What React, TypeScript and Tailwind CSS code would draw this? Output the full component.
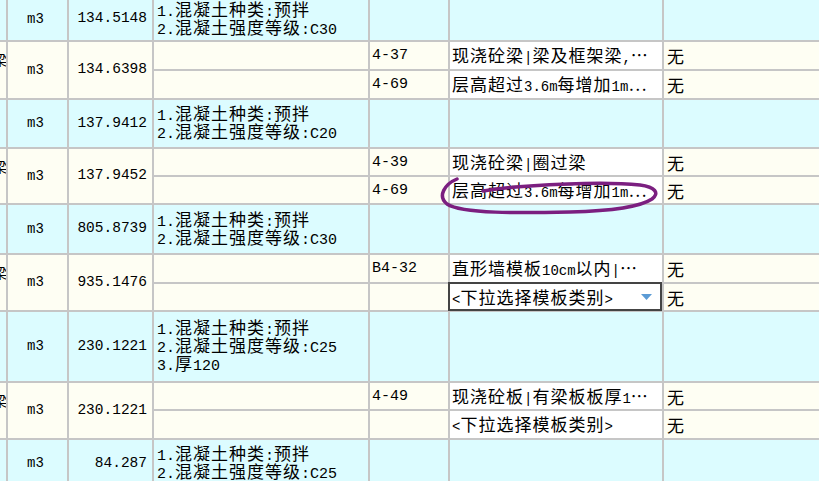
import React from "react";

const CJK = "font-['Noto_Sans_CJK_SC',sans-serif] text-[17px] tracking-[1px]";
const MONO = "font-['Liberation_Mono',monospace] text-[15px]";
const MONO_S = "font-['Liberation_Mono',monospace] text-[14px]";

function T({ s, small }: { s: string; small?: boolean }) {
  const runs: { a: boolean; t: string }[] = [];
  for (const ch of s) {
    const a = ch.charCodeAt(0) < 128;
    const last = runs[runs.length - 1];
    if (last && last.a === a) last.t += ch;
    else runs.push({ a, t: ch });
  }
  return (
    <span className="whitespace-pre">
      {runs.map((r, i) => (
        <span key={i} className={r.a ? (small ? MONO_S : MONO) : CJK}>
          {r.t}
        </span>
      ))}
    </span>
  );
}

const COLS = "grid grid-cols-[6px_59px_83px_214px_78px_212px_1fr] gap-[2px]";
const BLUE = "bg-[#dcfcff]";
const CREAM = "bg-[#fefef3]";

function Desc({ lines }: { lines: string[] }) {
  return (
    <div className="flex flex-col justify-center pl-[3px] pt-[1px] leading-[18px] text-black overflow-hidden">
      {lines.map((l, i) => (
        <div key={i} className="h-[18px] flex items-center">
          <T s={l} />
        </div>
      ))}
    </div>
  );
}

function BlueRow({ h, qty, lines }: { h: string; qty: string; lines: string[] }) {
  return (
    <div className={`${COLS} ${h}`}>
      <div className={BLUE} />
      <div className={`${BLUE} flex items-center justify-center pr-[4px] ${MONO_S} text-black`}>m3</div>
      <div className={`${BLUE} flex items-center justify-end pr-[5px] text-[14.5px] font-['Liberation_Mono',monospace] text-black`}>
        {qty}
      </div>
      <div className={`${BLUE} flex`}>
        <Desc lines={lines} />
      </div>
      <div className={BLUE} />
      <div className={BLUE} />
      <div className={BLUE} />
    </div>
  );
}

type Sub = { code: string; name: string; drop?: boolean; box?: boolean };

function CreamRow({ rows, qty, subs }: { rows: string; qty: string; subs: Sub[] }) {
  return (
    <div className={`${COLS} ${rows}`}>
      <div className={`${CREAM} row-span-2 overflow-hidden flex justify-end items-start pt-[8px]`}>
        <span className={`font-['Noto_Sans_CJK_SC',sans-serif] text-[14px] whitespace-nowrap text-black leading-[18px] -mr-[1px]`}>梁</span>
      </div>
      <div className={`${CREAM} row-span-2 flex items-center justify-center pr-[4px] ${MONO_S} text-black`}>m3</div>
      <div className={`${CREAM} row-span-2 flex items-center justify-end pr-[5px] text-[14.5px] font-['Liberation_Mono',monospace] text-black`}>
        {qty}
      </div>
      {subs.map((s, i) => (
        <React.Fragment key={i}>
          <div className={CREAM} />
          <div className={`${CREAM} flex items-center pl-[2px] pt-[2px] ${MONO} text-black`}>{s.code}</div>
          <div className="relative bg-white flex items-center pl-[2px] pt-[2px] text-black leading-[18px] whitespace-nowrap">
            <T s={s.name} small />
            {s.drop && (
              <svg className="ml-auto mr-[10px] mt-[-2px]" width="11" height="6" viewBox="0 0 11 6">
                <polygon points="0,0 11,0 5.5,6" fill="#5b9bd5" />
              </svg>
            )}
            {s.box && (
              <div className="absolute -left-[2px] -top-[2px] right-0 -bottom-[1px] border-2 border-[#444] z-10" />
            )}
          </div>
          <div className={`${CREAM} flex items-center pl-[3px] pt-[2px] text-black leading-[18px]`}>
            <T s="无" />
          </div>
        </React.Fragment>
      ))}
    </div>
  );
}

export default function App() {
  return (
    <div className="relative w-[819px] h-[481px] overflow-hidden bg-[#c6c6c6]">
      <div className="flex flex-col gap-[2px] -mt-[2px]">
        <BlueRow h="h-[42px]" qty="134.5148" lines={["1.混凝土种类:预拌", "2.混凝土强度等级:C30"]} />
        <CreamRow
          rows="grid-rows-[27px_27px]"
          qty="134.6398"
          subs={[
            { code: "4-37", name: "现浇砼梁|梁及框架梁,⋯" },
            { code: "4-69", name: "层高超过3.6m每增加1m⋯" },
          ]}
        />
        <BlueRow h="h-[47px]" qty="137.9412" lines={["1.混凝土种类:预拌", "2.混凝土强度等级:C20"]} />
        <CreamRow
          rows="grid-rows-[26px_26px]"
          qty="137.9452"
          subs={[
            { code: "4-39", name: "现浇砼梁|圈过梁" },
            { code: "4-69", name: "层高超过3.6m每增加1m⋯" },
          ]}
        />
        <BlueRow h="h-[48px]" qty="805.8739" lines={["1.混凝土种类:预拌", "2.混凝土强度等级:C30"]} />
        <CreamRow
          rows="grid-rows-[27px_26px]"
          qty="935.1476"
          subs={[
            { code: "B4-32", name: "直形墙模板10cm以内|⋯" },
            { code: "", name: "<下拉选择模板类别>", drop: true, box: true },
          ]}
        />
        <BlueRow
          h="h-[69px]"
          qty="230.1221"
          lines={["1.混凝土种类:预拌", "2.混凝土强度等级:C25", "3.厚120"]}
        />
        <CreamRow
          rows="grid-rows-[26px_27px]"
          qty="230.1221"
          subs={[
            { code: "4-49", name: "现浇砼板|有梁板板厚1⋯" },
            { code: "", name: "<下拉选择模板类别>" },
          ]}
        />
        <BlueRow h="h-[47px]" qty="84.287" lines={["1.混凝土种类:预拌", "2.混凝土强度等级:C25"]} />
      </div>
      <svg className="absolute inset-0 pointer-events-none z-20" width="819" height="481" viewBox="0 0 819 481">
        <path
          d="M 457 179 C 445 184, 437 196, 447 204 C 462 214, 520 213, 570 212 C 610 211, 640 207, 652 199 C 660 193, 655 187, 640 185 C 610 182, 560 184, 530 186 C 510 187, 495 189, 483 191"
          fill="none"
          stroke="#7b1f80"
          strokeWidth="3.5"
          strokeLinecap="round"
        />
      </svg>
    </div>
  );
}
